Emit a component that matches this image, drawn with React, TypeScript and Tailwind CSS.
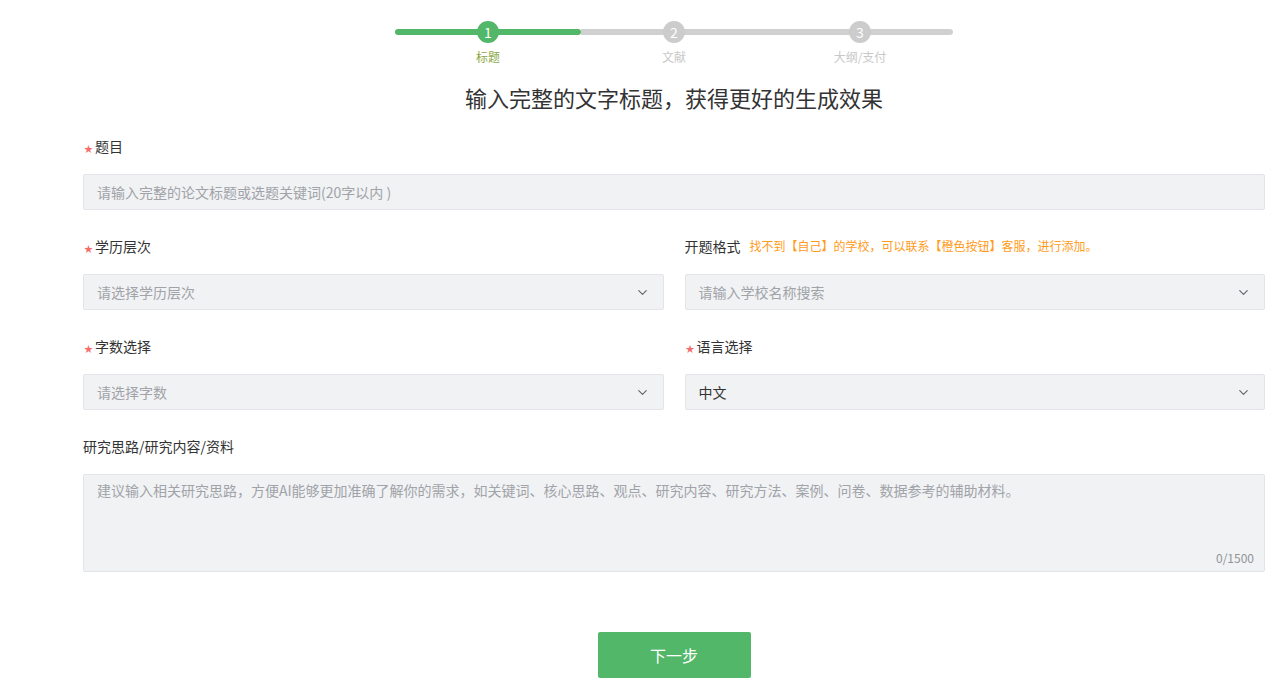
import { ChevronDown } from 'lucide-react'

const steps = [
  { n: 1, label: '标题', active: true },
  { n: 2, label: '文献', active: false },
  { n: 3, label: '大纲/支付', active: false },
]

function Label({ text, required }: { text: string; required?: boolean }) {
  return (
    <div className="h-[20px] flex items-center text-[14px] text-[#333] mb-[18px]">
      {required && <span className="text-[#f56c6c] text-[9px] mr-[2px] mt-[5px] ml-[1px]">★</span>}
      <span>{text}</span>
    </div>
  )
}

function Select({ placeholder, value }: { placeholder: string; value?: string }) {
  return (
    <div className="h-[36px] bg-[#f1f2f4] border border-[#e2e4e8] rounded-[2px] flex items-center justify-between pl-[13px] pr-[13px]">
      <span className={value ? 'text-[14px] text-[#333]' : 'text-[14px] text-[#a0a3a8]'}>{value ?? placeholder}</span>
      <ChevronDown className="w-[15px] h-[15px] text-[#606266]" strokeWidth={1.8} />
    </div>
  )
}

export default function App() {
  return (
    <div
      className="w-[1285px] h-[685px] bg-white overflow-hidden"
      style={{ fontFamily: '"Noto Sans CJK SC", "Noto Sans", sans-serif' }}
    >
      <div className="ml-[83px] w-[1182px] flex flex-col">
        {/* stepper */}
        <div className="flex justify-center pt-[21px]">
          <div className="flex">
            {steps.map((s, i) => (
              <div key={s.n} className="w-[186px] flex flex-col items-center">
                <div className="relative w-full h-[22px] flex items-center">
                  <div
                    className={
                      (s.active ? 'bg-[#52b768] rounded-r-full ' : 'bg-[#d0d0d0] ') +
                      (i === 0 ? 'rounded-l-full ' : '') +
                      (i === 2 ? 'rounded-r-full ' : '') +
                      'w-full h-[6px]'
                    }
                  />
                  <div
                    className={
                      (s.active ? 'bg-[#52b768] ' : 'bg-[#cccccc] ') +
                      'absolute left-1/2 -translate-x-1/2 w-[22px] h-[22px] rounded-full flex items-center justify-center text-white text-[14px]'
                    }
                  >
                    {s.n}
                  </div>
                </div>
                <div className={(s.active ? 'text-[#8aa843] ' : 'text-[#c8c8c8] ') + 'text-[12px] mt-[6px] leading-[16px]'}>
                  {s.label}
                </div>
              </div>
            ))}
          </div>
        </div>

        <h1 className="text-center text-[22px] text-[#333] mt-[17px] leading-[30px]">输入完整的文字标题，获得更好的生成效果</h1>

        <div className="mt-[24px]">
          <Label text="题目" required />
          <div className="h-[36px] bg-[#f1f2f4] border border-[#e2e4e8] rounded-[2px] flex items-center pl-[13px] text-[14px] text-[#a0a3a8]">
            请输入完整的论文标题或选题关键词(20字以内 )
          </div>
        </div>

        <div className="grid grid-cols-2 gap-x-[21px] mt-[26px]">
          <div>
            <Label text="学历层次" required />
            <Select placeholder="请选择学历层次" />
          </div>
          <div>
            <div className="h-[20px] flex items-center mb-[18px]">
              <span className="text-[14px] text-[#333]">开题格式</span>
              <span className="text-[12px] text-[#ff9b1a] ml-[9px]">找不到【自己】的学校，可以联系【橙色按钮】客服，进行添加。</span>
            </div>
            <Select placeholder="请输入学校名称搜索" />
          </div>
        </div>

        <div className="grid grid-cols-2 gap-x-[21px] mt-[26px]">
          <div>
            <Label text="字数选择" required />
            <Select placeholder="请选择字数" />
          </div>
          <div>
            <Label text="语言选择" required />
            <Select placeholder="" value="中文" />
          </div>
        </div>

        <div className="mt-[26px]">
          <div className="h-[20px] flex items-center text-[14px] text-[#333] mb-[18px]">研究思路/研究内容/资料</div>
          <div className="relative h-[98px] bg-[#f1f2f4] border border-[#e2e4e8] rounded-[2px] pl-[13px] pt-[5px] text-[14px] text-[#a0a3a8]">
            建议输入相关研究思路，方便AI能够更加准确了解你的需求，如关键词、核心思路、观点、研究内容、研究方法、案例、问卷、数据参考的辅助材料。
            <span className="absolute right-[10px] bottom-[4px] text-[12px] text-[#909399]">0/1500</span>
          </div>
        </div>

        <div className="flex justify-center mt-[60px]">
          <button className="w-[153px] h-[46px] bg-[#52b768] rounded-[2px] text-white text-[16px]">下一步</button>
        </div>
      </div>
    </div>
  )
}
